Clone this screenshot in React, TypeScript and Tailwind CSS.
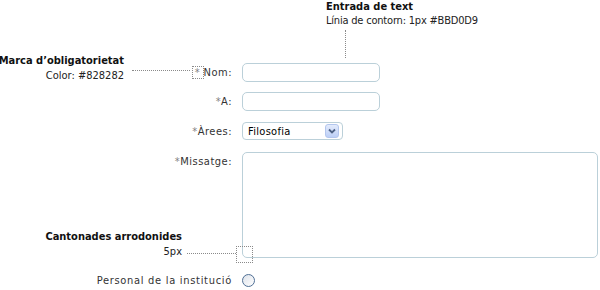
import React from 'react';

const dotted = 'border-dotted border-[#8a8a8a]';

function Req() {
  return <span className="text-[#828282]">*</span>;
}

function Label({ children, boxed = false }: { children: React.ReactNode; boxed?: boolean }) {
  return (
    <div className="w-[232px] shrink-0 text-right text-[#333] tracking-[0.5px] whitespace-nowrap">
      {boxed ? (
        <span className={`inline-flex justify-center items-start w-[12px] h-[13px] border ${dotted} align-middle leading-[12px] -mt-[1px]`}>
          <Req />
        </span>
      ) : (
        <Req />
      )}
      {children}
    </div>
  );
}

function TextInput() {
  return <div className="ml-[10px] w-[138px] h-[19px] rounded-[5px] border border-[#BBD0D9] bg-white" />;
}

function SelectBox() {
  return (
    <div className="ml-[10px] w-[101px] h-[18px] rounded-[4px] border border-[#BBD0D9] bg-white flex items-center pl-[5px] pr-[3px]">
      <span className="flex-1 text-black tracking-[0.3px]">Filosofia</span>
      <div className="w-[14px] h-[14px] rounded-[3px] border border-[#b3c6ee] bg-gradient-to-b from-[#e3ebfc] to-[#bccff6] flex items-center justify-center">
        <svg width="8" height="6" viewBox="0 0 8 6">
          <path d="M1 1.5 L4 4.5 L7 1.5" fill="none" stroke="#4d6185" strokeWidth="1.8" />
        </svg>
      </div>
    </div>
  );
}

export default function App() {
  return (
    <div className="relative w-[600px] h-[290px] bg-white overflow-hidden text-[11px] leading-[13px] font-['DejaVu_Sans_Condensed','DejaVu_Sans',sans-serif] text-[#222]">
      {/* annotation: text input */}
      <div className="pl-[326px] whitespace-nowrap">
        <div className="font-bold text-[#111]">Entrada de text</div>
        <div className="mt-[1px] tracking-[-0.2px]">Línia de contorn: 1px #BBD0D9</div>
      </div>
      <div className={`ml-[345px] mt-[3px] h-[28px] border-l ${dotted}`} />

      {/* form */}
      <div className="mt-[5px] flex items-center">
        <Label boxed>Nom:</Label>
        <TextInput />
      </div>
      <div className="mt-[10px] flex items-center">
        <Label>A:</Label>
        <TextInput />
      </div>
      <div className="mt-[11px] flex items-center">
        <Label>Àrees:</Label>
        <SelectBox />
      </div>
      <div className="mt-[12px] flex items-start">
        <div className="pt-[3px]">
          <Label>Missatge:</Label>
        </div>
        <div className="ml-[10px] w-[356px] h-[106px] rounded-[5px] border border-[#BBD0D9] bg-white" />
      </div>
      <div className="mt-[16px] flex items-center">
        <div className="w-[232px] shrink-0 text-right text-[#333] tracking-[0.7px] whitespace-nowrap">Personal de la institució</div>
        <div className="ml-[10px] w-[13px] h-[13px] rounded-full border border-[#4f6f95] bg-gradient-to-br from-[#dde2ea] to-white" />
      </div>

      {/* annotation: required mark */}
      <div className="absolute right-[476px] top-[54px] text-right whitespace-nowrap">
        <div className="font-bold text-[#111]">Marca d’obligatorietat</div>
        <div className="mt-[2px]">Color: #828282</div>
      </div>
      <div className={`absolute left-[132px] top-[70px] w-[58px] border-t ${dotted}`} />

      {/* annotation: rounded corners */}
      <div className="absolute right-[418px] top-[230px] text-right whitespace-nowrap">
        <div className="font-bold text-[#111]">Cantonades arrodonides</div>
        <div className="mt-[2px]">5px</div>
      </div>
      <div className={`absolute left-[187px] top-[253px] w-[49px] border-t ${dotted}`} />
      <div className={`absolute left-[236px] top-[246px] w-[17px] h-[17px] border ${dotted}`} />
    </div>
  );
}
